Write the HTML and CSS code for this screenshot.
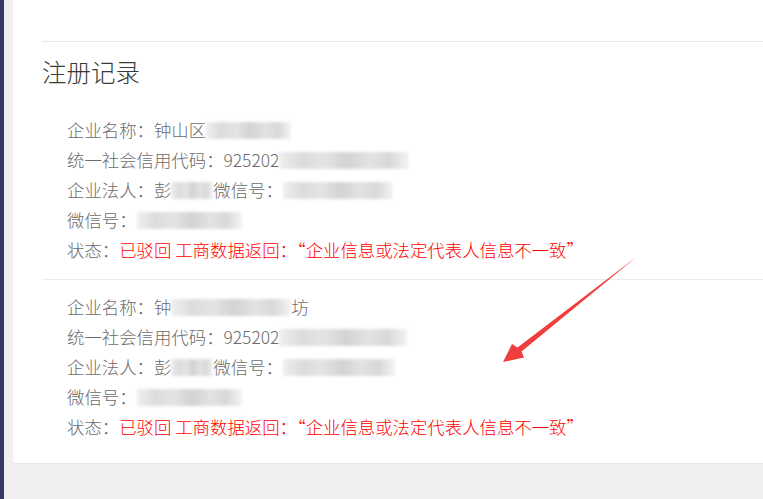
FILE: index.html
```html
<!DOCTYPE html>
<html lang="zh">
<head>
<meta charset="utf-8">
<link rel="stylesheet" href="styles.css">
</head>
<body>
<div class="layout">
  <div class="sidebar"></div>
  <main class="card">
    <div class="card-inner">
      <h2 class="title">注册记录</h2>
      <section class="record">
        <div class="line">企业名称：钟山区<span class="blur w85"></span></div>
        <div class="line">统一社会信用代码：925202<span class="blur w130"></span></div>
        <div class="line">企业法人：彭<span class="blur w42"></span>微信号：<span class="blur w110"></span></div>
        <div class="line">微信号：<span class="blur w105"></span></div>
        <div class="line">状态：<span class="red">已驳回 工商数据返回：“企业信息或法定代表人信息不一致”</span></div>
      </section>
      <section class="record">
        <div class="line">企业名称：钟<span class="blur w120"></span>坊</div>
        <div class="line">统一社会信用代码：925202<span class="blur w128"></span></div>
        <div class="line">企业法人：彭<span class="blur w42"></span>微信号：<span class="blur w112"></span></div>
        <div class="line">微信号：<span class="blur w105"></span></div>
        <div class="line">状态：<span class="red">已驳回 工商数据返回：“企业信息或法定代表人信息不一致”</span></div>
      </section>
    </div>
  </main>
</div>
<svg class="arrow" width="763" height="499" viewBox="0 0 763 499">
  <polygon points="637,256.5 521.5,351.5 524,357.5 503,362 512,344 517.5,347.5" fill="#f03d3d"/>
</svg>
</body>
</html>
```
FILE: styles.css
```css
html, body {
  margin: 0;
  padding: 0;
  background: #f0f0f0;
  font-family: "Noto Sans CJK SC", "Liberation Sans", sans-serif;
}
.layout {
  display: flex;
  height: 499px;
  overflow: hidden;
}
.sidebar {
  width: 4px;
  flex: none;
  background: #363667;
}
.card {
  flex: 1;
  margin-left: 9px;
  height: 463px;
  background: #fff;
  border-radius: 0 0 0 3px;
  box-shadow: 0 1px 2px rgba(0,0,0,0.06);
}
.card-inner {
  margin-top: 41px;
  margin-left: 29px;
  border-top: 1px solid #e9e9e9;
}
.title {
  margin: 10px 0 11px 0;
  font-size: 24.5px;
  font-weight: 300;
  line-height: 40px;
  color: #3a3a3a;
}
.record {
  padding: 12px 0 14px 25px;
  border-bottom: 1px solid #ebebeb;
}
.record:last-child {
  border-bottom: none;
}
.line {
  font-size: 17.4px;
  font-weight: 300;
  line-height: 30px;
  height: 30px;
  color: #6b6b6b;
  white-space: nowrap;
}
.red {
  color: #ff0000;
}
.blur {
  display: inline-block;
  height: 17px;
  vertical-align: -2px;
  background: linear-gradient(90deg, #ececee 0%, #d6d6d8 18%, #e0e0e1 35%, #cdcbcb 52%, #dedede 70%, #d2d2d2 85%, #f2f2f4 100%);
  filter: blur(1.5px);
  opacity: 0.85;
}
.w42 { width: 42px; }
.w85 { width: 85px; }
.w105 { width: 105px; }
.w110 { width: 110px; }
.w112 { width: 112px; }
.w120 { width: 120px; }
.w128 { width: 128px; }
.w130 { width: 130px; }
.arrow {
  position: absolute;
  left: 0;
  top: 0;
  pointer-events: none;
}
```
